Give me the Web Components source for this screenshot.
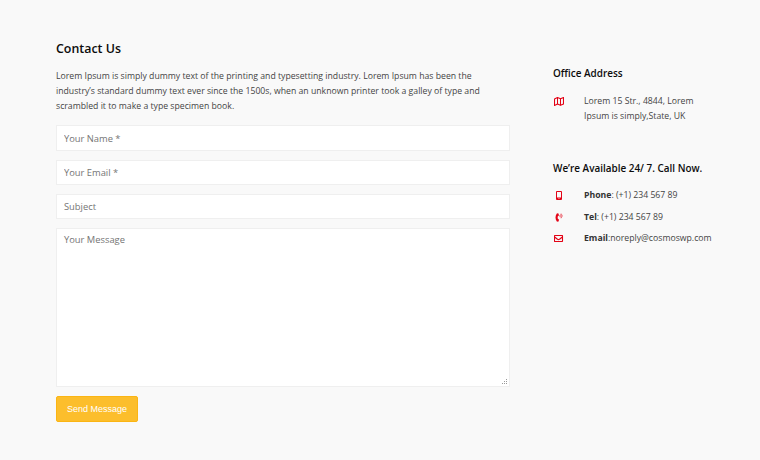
<!DOCTYPE html>
<html lang="en">
<head>
<meta charset="utf-8">
<title>Contact Us</title>
<style>
html,body{margin:0;height:100%;overflow:hidden}
body{background:#f9f9f9;color:#444;font:8.7px/15px "Open Sans","Noto Sans",sans-serif}
</style>
</head>
<body>
<contact-page></contact-page>
<script>
const define = (name, html, setup) => customElements.define(name, class extends HTMLElement {
  constructor() {
    super();
    const t = document.createElement('template');
    t.innerHTML = html;
    this.attachShadow({ mode: 'open' }).append(t.content.cloneNode(true));
  }
  connectedCallback() { if (setup) setup(this, this.shadowRoot); }
});

define('section-title', `
<style>
:host{display:block;color:#0c0c0c;font-size:9.94px;font-weight:600;line-height:16px;white-space:nowrap}
:host([large]){font-size:12.41px;line-height:18px}
</style><slot></slot>`);

define('form-field', `
<style>
:host{display:block;height:25px}
:host([multiline]){height:159px}
input,textarea{display:block;box-sizing:border-box;width:100%;height:100%;margin:0;border:1px solid #efefef;border-radius:0;background:#fff;padding:0 7px;font:9.36px/15px "Open Sans","Noto Sans",sans-serif;color:#444;outline:0}
textarea{padding-top:3px;resize:none}
::placeholder{color:#757575;opacity:1}
.area{position:relative;height:100%}
.area svg{position:absolute;right:2px;bottom:2px}
</style><div class="area"></div>`, (host, root) => {
  const area = root.querySelector('.area');
  if (area.firstChild) return;
  const multi = host.hasAttribute('multiline');
  const control = document.createElement(multi ? 'textarea' : 'input');
  control.placeholder = host.getAttribute('label');
  area.append(control);
  if (multi) area.insertAdjacentHTML('beforeend',
    '<svg width="6" height="6" viewBox="0 0 6 6" fill="#999"><path d="M4 0h1v1H4zM4 2h1v1H4zM2 2h1v1H2zM0 4h1v1H0zM2 4h1v1H2zM4 4h1v1H4z"/></svg>');
});

define('send-button', `
<style>
:host{display:block;width:82px;height:26px}
button{box-sizing:border-box;width:100%;height:100%;margin:0;padding:0;border:1px solid #fbb514;border-radius:2px;background:#fcbe2c;color:#fff;font:9px/24px "Liberation Sans",Arial,sans-serif;display:block}
</style><button type="button"><slot></slot></button>`);

define('info-row', `
<style>
:host{display:grid;grid-template-columns:12px 1fr;column-gap:19px;white-space:nowrap}
.icon{height:15px;display:flex;align-items:center;justify-content:center;color:#e30316}
::slotted(b){font-weight:700;color:#333}
</style><div class="icon"><slot name="icon"></slot></div><div><slot></slot></div>`);

define('contact-form', `
<style>
:host{display:block;width:454px}
p{margin:11px 0 11px;white-space:nowrap}
.fields{display:grid;row-gap:9px}
.fields form-field:first-child{height:26px}
send-button{margin-top:9px}
</style>
<section-title large>Contact Us</section-title>
<p>Lorem Ipsum is simply dummy text of the printing and typesetting industry. Lorem Ipsum has been the<br>industry’s standard dummy text ever since the 1500s, when an unknown printer took a galley of type and<br>scrambled it to make a type specimen book.</p>
<div class="fields">
<form-field label="Your Name *"></form-field>
<form-field label="Your Email *"></form-field>
<form-field label="Subject"></form-field>
<form-field label="Your Message" multiline></form-field>
</div>
<send-button>Send Message</send-button>`);

define('contact-details', `
<style>
:host{display:block;width:165px;padding-top:25px}
.address{margin-top:13px}
.call{margin-top:36px}
.list{margin-top:12px;display:grid;row-gap:6px}
.list info-row:first-child{margin-bottom:1px}
svg{display:block;fill:currentColor}
</style>
<section-title>Office Address</section-title>
<info-row class="address"><svg slot="icon" width="10" height="9" viewBox="0 0 10 9"><g fill="none" stroke="currentColor" stroke-linejoin="round"><path d="M.5 2 3.5.6l3 1.2 3-1.3v6.4l-3 1.4-3-1.2-3 1.3z" stroke-width="1.1"/><path d="M3.5.6v6.5M6.5 1.8v6.5"/></g></svg>Lorem 15 Str., 4844, Lorem<br>Ipsum is simply,State, UK</info-row>
<section-title class="call">We’re Available 24/ 7. Call Now.</section-title>
<div class="list">
<info-row><svg slot="icon" width="6" height="9" viewBox="0 0 6 9"><path fill-rule="evenodd" d="M.9 0h4.2Q6 0 6 .9v7.2Q6 9 5.1 9H.9Q0 9 0 8.1V.9Q0 0 .9 0zM1 1.1v5.4h4V1.1zM2.5 7.2v.9h1v-.9z"/></svg><b>Phone</b>: (+1) 234 567 89</info-row>
<info-row><svg slot="icon" width="8" height="9" viewBox="0 0 8 9"><path d="M1.8.6 3.2.3l.9 2-1.2 1q-.5 1.2 0 2.5l1.2.9-.8 2-1.5-.3Q-.8 4.5 1.8.6z"/><path d="M4.9 2.3q.6.6 0 1.2M5.7 1.6q1.3 1.3 0 2.6M6.4.8q2.1 2.1 0 4.2" fill="none" stroke="currentColor" stroke-width=".55" stroke-linecap="round"/></svg><b>Tel</b>: (+1) 234 567 89</info-row>
<info-row><svg slot="icon" width="10" height="7" viewBox="0 0 10 7"><g fill="none" stroke="currentColor" stroke-width="1.1"><rect x=".5" y=".5" width="8" height="6" rx=".5"/><path d="M.6 2 3.5 4.3q1 .6 2 0L8.4 2" stroke-width="1.2"/></g></svg><b>Email</b>:noreply@cosmoswp.com</info-row>
</div>`);

define('contact-page', `
<style>
:host{display:grid;grid-template-columns:454px 165px;column-gap:43px;padding:40px 0 0 56px;height:420px}
</style><contact-form></contact-form><contact-details></contact-details>`);
</script>
</body>
</html>
